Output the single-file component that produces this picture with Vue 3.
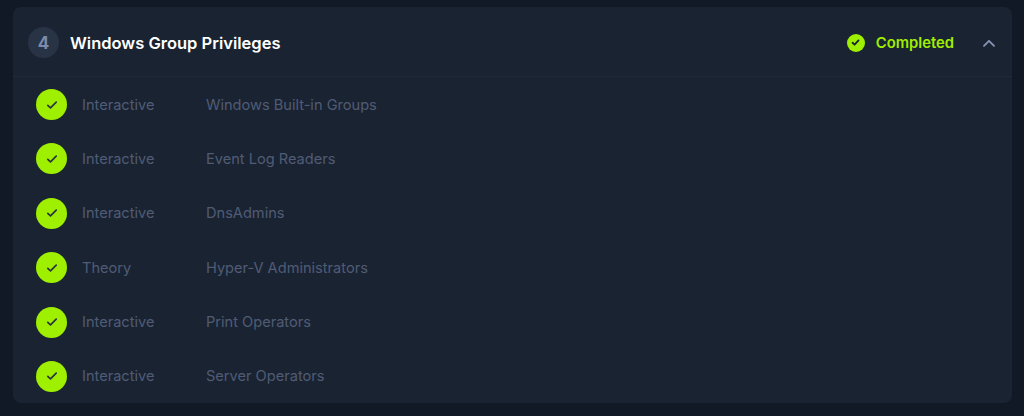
<script setup>
const sections = [
  { type: "Interactive", name: "Windows Built-in Groups" },
  { type: "Interactive", name: "Event Log Readers" },
  { type: "Interactive", name: "DnsAdmins" },
  { type: "Theory", name: "Hyper-V Administrators" },
  { type: "Interactive", name: "Print Operators" },
  { type: "Interactive", name: "Server Operators" },
];
</script>

<template>
  <div class="page">
    <div class="card">
      <div class="header">
        <div class="title">
          <span class="num">4</span>
          <span class="name">Windows Group Privileges</span>
        </div>
        <div class="status">
          <span class="status-icon">
            <svg width="11" height="11" viewBox="0 0 12 12" fill="none">
              <path d="M2.8 6.3 5 8.4 9.3 3.8" stroke="#1a2332" stroke-width="2" stroke-linecap="round" stroke-linejoin="round" />
            </svg>
          </span>
          <span class="status-text">Completed</span>
          <svg class="chevron" width="14" height="14" viewBox="0 0 14 14" fill="none">
            <path d="M2 9.8 7 4.8 12 9.8" stroke="#8693b0" stroke-width="1.9" stroke-linecap="round" stroke-linejoin="round" />
          </svg>
        </div>
      </div>
      <div class="list">
        <div v-for="s in sections" :key="s.name" class="row">
          <span class="check">
            <svg width="14" height="14" viewBox="0 0 14 14" fill="none">
              <path d="M2.8 7.4 5.5 9.9 11.2 4.2" stroke="#2a3340" stroke-width="1.7" stroke-linecap="round" stroke-linejoin="round" />
            </svg>
          </span>
          <span class="type">{{ s.type }}</span>
          <span class="section">{{ s.name }}</span>
        </div>
      </div>
    </div>
  </div>
</template>

<style>
html,
body {
  margin: 0;
  background: #111927;
}
</style>

<style scoped>
.page {
  width: 1024px;
  height: 416px;
  box-sizing: border-box;
  padding: 7px 12px 13px 13px;
  background: #111927;
  font-family: Inter, "Liberation Sans", sans-serif;
  font-size: 14.6px;
  overflow: hidden;
}
.card {
  height: 396px;
  background: #1a2332;
  border-radius: 8px;
}
.header {
  height: 70px;
  box-sizing: border-box;
  border-bottom: 1px solid #1f2a3b;
  display: flex;
  align-items: center;
  justify-content: space-between;
  padding: 2px 16px 0 15px;
}
.title {
  display: flex;
  align-items: center;
  gap: 11px;
}
.num {
  width: 31px;
  height: 31px;
  border-radius: 50%;
  background: #293346;
  color: #7d8bab;
  font-size: 17px;
  font-weight: 700;
  display: flex;
  align-items: center;
  justify-content: center;
}
.name {
  color: #fff;
  font-size: 16.5px;
  font-weight: 600;
}
.status {
  display: flex;
  align-items: center;
}
.status-icon {
  width: 18px;
  height: 18px;
  border-radius: 50%;
  background: #9fef00;
  display: flex;
  align-items: center;
  justify-content: center;
  margin-right: 11px;
}
.status-text {
  color: #9fef00;
  font-size: 14.8px;
  font-weight: 600;
  margin-right: 28px;
}
.list {
  padding: 12px 0 0 23px;
  display: flex;
  flex-direction: column;
  gap: 23.4px;
}
.row {
  display: flex;
  align-items: center;
  height: 31px;
}
.check {
  width: 31px;
  height: 31px;
  border-radius: 50%;
  background: #9fef00;
  display: flex;
  align-items: center;
  justify-content: center;
  flex-shrink: 0;
}
.type {
  width: 124px;
  margin-left: 15px;
  color: #505c75;
}
.section {
  color: #505c75;
}
</style>
